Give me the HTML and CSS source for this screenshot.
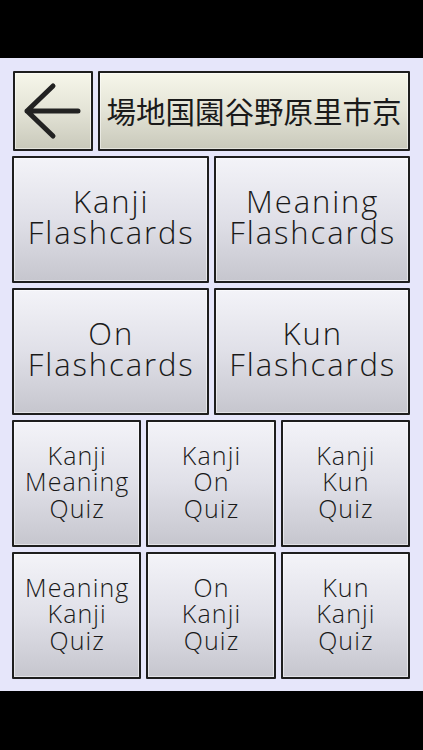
FILE: index.html
```html
<!DOCTYPE html>
<html lang="ja">
<head>
    <meta charset="UTF-8">
    <meta name="viewport" content="width=device-width, initial-scale=1.0">
    <title>Kanji Menu</title>
    <link rel="stylesheet" href="styles.css">
</head>
<body>
    <div class="screen">
        <div class="top-row">
            <button class="btn btn-beige back">
                <svg width="76" height="76" viewBox="0 0 76 76">
                    <path d="M63 38H12 M38 13 L12 38 L38 63" fill="none" stroke="#222" stroke-width="5" stroke-linecap="round" stroke-linejoin="round"/>
                </svg>
            </button>
            <button class="btn btn-beige kanji-set">場地国園谷野原里市京</button>
        </div>

        <div class="grid two">
            <button class="btn big"><span>Kanji</span><span>Flashcards</span></button>
            <button class="btn big"><span>Meaning</span><span>Flashcards</span></button>
            <button class="btn big"><span>On</span><span>Flashcards</span></button>
            <button class="btn big"><span>Kun</span><span>Flashcards</span></button>
        </div>

        <div class="grid three">
            <button class="btn small"><span>Kanji</span><span>Meaning</span><span>Quiz</span></button>
            <button class="btn small"><span>Kanji</span><span>On</span><span>Quiz</span></button>
            <button class="btn small"><span>Kanji</span><span>Kun</span><span>Quiz</span></button>
            <button class="btn small"><span>Meaning</span><span>Kanji</span><span>Quiz</span></button>
            <button class="btn small"><span>On</span><span>Kanji</span><span>Quiz</span></button>
            <button class="btn small"><span>Kun</span><span>Kanji</span><span>Quiz</span></button>
        </div>
    </div>
</body>
</html>
```

FILE: styles.css
```css
html, body {
    margin: 0;
    padding: 0;
    background-color: #000;
}

body {
    height: 750px;
    font-family: "Open Sans", "Noto Sans CJK JP", sans-serif;
    color: #222;
}

.screen {
    margin-top: 58px;
    height: 633px;
    box-sizing: border-box;
    padding: 13px 13px 12px 12px;
    background-color: #e6e6fa;
    display: flex;
    flex-direction: column;
    gap: 5px;
}

.top-row {
    display: flex;
    gap: 5px;
    height: 80px;
    padding-left: 1px;
}

.grid {
    display: grid;
    gap: 5px;
}

.grid.two {
    grid-template-columns: 1fr 1fr;
    grid-auto-rows: 127px;
}

.grid.three {
    grid-template-columns: 1fr 1fr 1fr;
    grid-auto-rows: 127px;
}

.btn {
    margin: 0;
    padding: 0;
    border: 2px solid #1e1e1e;
    border-radius: 1px;
    box-shadow: inset 0 0 0 1px rgba(255, 255, 255, 0.5);
    background: linear-gradient(to bottom, #f3f3f8 0%, #e0e0e8 50%, #c6c6ce 100%);
    font-family: inherit;
    font-weight: 360;
    color: #1a1a1a;
    display: flex;
    flex-direction: column;
    align-items: center;
    justify-content: center;
    text-align: center;
}

.btn span {
    display: block;
}

.btn-beige {
    background: linear-gradient(to bottom, #f6f6ea 0%, #e3e3d6 50%, #c9c9bb 100%);
}

.back {
    width: 80px;
    flex: none;
}

.kanji-set {
    flex: 1;
    font-family: "Noto Sans CJK JP", sans-serif;
    font-weight: 400;
    font-size: 29.5px;
    padding-bottom: 2px;
}

.big {
    font-size: 31px;
    line-height: 31px;
    letter-spacing: 1.9px;
    padding: 0 0 6px 1.9px;
}

.small {
    font-size: 25px;
    line-height: 26.5px;
    letter-spacing: 1.1px;
    padding: 0 0 4px 1.1px;
}
```
